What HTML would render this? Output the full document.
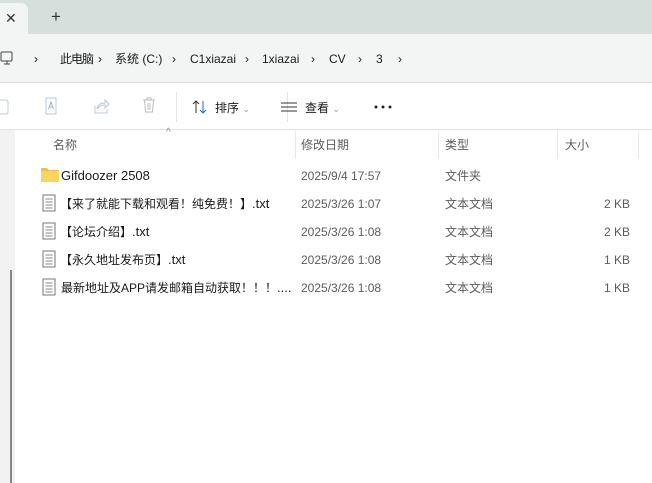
<html><head><style>
body{margin:0;width:652px;height:483px;overflow:hidden;background:#fff;font-family:"Liberation Sans","Noto Sans CJK SC",sans-serif;position:relative;color:#1a1a1a}
.a{position:absolute;white-space:nowrap;line-height:16px}
.t{font-size:12px}
.g{color:#5c5c5c}
.bc{top:51px;font-size:12px}
.n{font-size:12px}
.n b{font-weight:normal;font-size:13px}
</style></head><body>
<div class="a" style="left:0;top:0;width:652px;height:34px;background:#d6dfdb"></div>
<div class="a" style="left:0;top:3px;width:28px;height:31px;background:#f2f5f4;border-radius:0 7px 0 0"></div>
<div class="a" style="left:5px;top:10px;font-size:14px;color:#333">✕</div>
<div class="a" style="left:51px;top:9px;font-size:17px;color:#333">+</div>
<div class="a" style="left:0;top:34px;width:652px;height:48px;background:#f2f5f4"></div>
<div class="a" style="left:0;top:82px;width:652px;height:1px;background:#dde0df"></div>
<svg class="a" style="left:0;top:51px" width="14" height="16"><rect x="1" y="1" width="11" height="9" rx="1" fill="none" stroke="#444"/><path d="M4 13h6M7 10v3" stroke="#444"/></svg>
<div class="a bc" style="left:34px">›</div>
<div class="a bc" style="left:60px;letter-spacing:-1px">此电脑</div>
<div class="a bc" style="left:98px">›</div>
<div class="a bc" style="left:115px">系统 (C:)</div>
<div class="a bc" style="left:172px">›</div>
<div class="a bc" style="left:190px">C1xiazai</div>
<div class="a bc" style="left:245px">›</div>
<div class="a bc" style="left:262px">1xiazai</div>
<div class="a bc" style="left:311px">›</div>
<div class="a bc" style="left:329px">CV</div>
<div class="a bc" style="left:358px">›</div>
<div class="a bc" style="left:376px">3</div>
<div class="a bc" style="left:398px">›</div>
<div class="a" style="left:0;top:129px;width:652px;height:1px;background:#e3e3e3"></div>
<svg class="a" style="left:0;top:97px" width="10" height="18"><rect x="-5" y="3" width="13" height="14" rx="2" fill="none" stroke="#b8c8d8"/></svg>
<svg class="a" style="left:43px;top:97px" width="16" height="18"><path d="M3 1h10v16H3z" fill="none" stroke="#b8c8d8"/><path d="M5.5 12l2.5-7 2.5 7M6.5 10h3" fill="none" stroke="#9cb4cc"/></svg>
<svg class="a" style="left:92px;top:97px" width="18" height="18"><path d="M3 9v7h12v-4" fill="none" stroke="#b8c8d8"/><path d="M5 12q1-6 8-6V3l4 4-4 4V8q-5 0-8 4z" fill="none" stroke="#b8c8d8"/></svg>
<svg class="a" style="left:141px;top:97px" width="16" height="17"><path d="M2 3h12M6 3V1h4v2M3.5 3l1 12h7l1-12M7 6v7M9 6v7" fill="none" stroke="#bbb"/></svg>
<div class="a" style="left:176px;top:92px;width:1px;height:30px;background:#e3e3e3"></div>
<div class="a" style="left:287px;top:92px;width:1px;height:30px;background:#e3e3e3"></div>
<svg class="a" style="left:192px;top:99px" width="16" height="16"><path d="M4 14V2M1 5l3-3 3 3" fill="none" stroke="#333"/><path d="M11 2v12M8 11l3 3 3-3" fill="none" stroke="#1a6fc9"/></svg>
<div class="a t" style="left:215px;top:100px">排序 <span style="color:#999;font-size:9px">⌄</span></div>
<svg class="a" style="left:281px;top:101px" width="16" height="12"><path d="M0 2h16M0 6h16M0 10h16" stroke="#333"/></svg>
<div class="a t" style="left:305px;top:100px">查看 <span style="color:#999;font-size:9px">⌄</span></div>
<svg class="a" style="left:374px;top:105px" width="18" height="4"><circle cx="2" cy="2" r="1.5" fill="#222"/><circle cx="9" cy="2" r="1.5" fill="#222"/><circle cx="16" cy="2" r="1.5" fill="#222"/></svg>
<div class="a" style="left:0;top:130px;width:15px;height:353px;background:#f2f2f2"></div>
<div class="a" style="left:10px;top:270px;width:2px;height:213px;background:#888"></div>
<div class="a" style="left:166px;top:125px;font-size:10px;color:#888">^</div>
<div class="a t g" style="left:53px;top:137px">名称</div>
<div class="a" style="left:295px;top:131px;width:1px;height:28px;background:#e8e8e8"></div>
<div class="a t g" style="left:301px;top:137px">修改日期</div>
<div class="a" style="left:438px;top:131px;width:1px;height:28px;background:#e8e8e8"></div>
<div class="a t g" style="left:445px;top:137px">类型</div>
<div class="a" style="left:557px;top:131px;width:1px;height:28px;background:#e8e8e8"></div>
<div class="a t g" style="left:565px;top:137px">大小</div>
<div class="a" style="left:638px;top:131px;width:1px;height:28px;background:#e8e8e8"></div>
<svg class="a" style="left:41px;top:167px" width="18" height="15"><path d="M0 2q0-1 1-1h5l2 2h9q1 0 1 1v10H0z" fill="#f0c044"/><rect x="0" y="4" width="18" height="11" rx="1" fill="#fbd462"/></svg>
<div class="a t" style="left:61px;top:168px;font-size:13px">Gifdoozer 2508</div>
<div class="a t g" style="left:301px;top:168px">2025/9/4 17:57</div>
<div class="a t g" style="left:445px;top:168px">文件夹</div>

<svg class="a" style="left:42px;top:194px" width="14" height="18"><path d="M1 1h12v16H1z" fill="#fff" stroke="#777"/><path d="M3.5 5h7M3.5 8h7M3.5 11h7M3.5 14h7" stroke="#888"/></svg>
<div class="a n" style="left:60px;top:196px">【来了就能下载和观看！纯免费！】<b>.txt</b></div>
<div class="a t g" style="left:301px;top:196px">2025/3/26 1:07</div>
<div class="a t g" style="left:445px;top:196px">文本文档</div>
<div class="a t g" style="left:604px;top:196px">2 KB</div>

<svg class="a" style="left:42px;top:222px" width="14" height="18"><path d="M1 1h12v16H1z" fill="#fff" stroke="#777"/><path d="M3.5 5h7M3.5 8h7M3.5 11h7M3.5 14h7" stroke="#888"/></svg>
<div class="a n" style="left:60px;top:224px">【论坛介绍】<b>.txt</b></div>
<div class="a t g" style="left:301px;top:224px">2025/3/26 1:08</div>
<div class="a t g" style="left:445px;top:224px">文本文档</div>
<div class="a t g" style="left:604px;top:224px">2 KB</div>

<svg class="a" style="left:42px;top:250px" width="14" height="18"><path d="M1 1h12v16H1z" fill="#fff" stroke="#777"/><path d="M3.5 5h7M3.5 8h7M3.5 11h7M3.5 14h7" stroke="#888"/></svg>
<div class="a n" style="left:60px;top:252px">【永久地址发布页】<b>.txt</b></div>
<div class="a t g" style="left:301px;top:252px">2025/3/26 1:08</div>
<div class="a t g" style="left:445px;top:252px">文本文档</div>
<div class="a t g" style="left:604px;top:252px">1 KB</div>

<svg class="a" style="left:42px;top:278px" width="14" height="18"><path d="M1 1h12v16H1z" fill="#fff" stroke="#777"/><path d="M3.5 5h7M3.5 8h7M3.5 11h7M3.5 14h7" stroke="#888"/></svg>
<div class="a n" style="left:61px;top:280px">最新地址及APP请发邮箱自动获取！！！<b>....</b></div>
<div class="a t g" style="left:301px;top:280px">2025/3/26 1:08</div>
<div class="a t g" style="left:445px;top:280px">文本文档</div>
<div class="a t g" style="left:604px;top:280px">1 KB</div>
</body></html>
